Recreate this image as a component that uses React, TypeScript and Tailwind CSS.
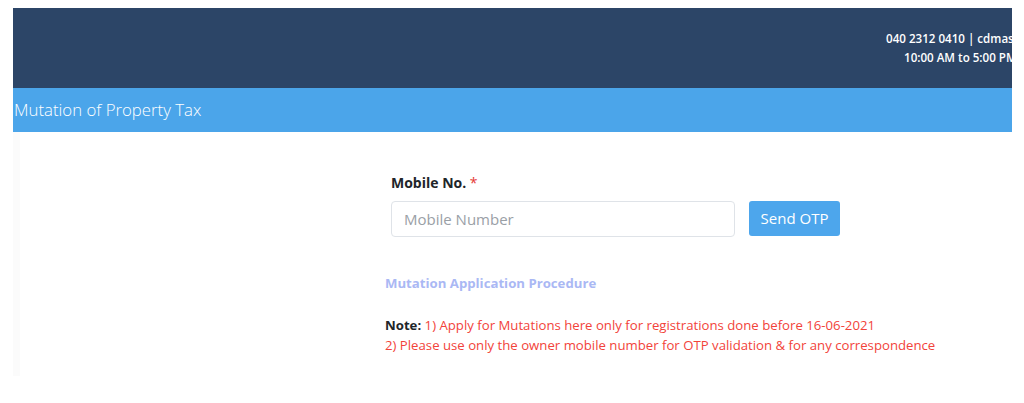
import React from "react";

export default function App() {
  return (
    <div className="w-[1024px] h-[403px] bg-white pt-[8px] pl-[13px]" style={{ fontFamily: '"Open Sans", "Noto Sans", sans-serif' }}>
      <div className="w-[999px] overflow-hidden">
        <div className="h-[80px] bg-[#2c4567] pl-[873px] pt-[21px] whitespace-nowrap text-white text-[11.6px] font-semibold leading-[19px]">
          <div>040 2312 0410 | cdmas@telangana.gov.in</div>
          <div className="pl-[18px]">10:00 AM to 5:00 PM</div>
        </div>
        <div className="h-[44px] bg-[#4ba5ea] flex items-center pl-[1px] text-white text-[16.8px] font-light">
          Mutation of Property Tax
        </div>
        <div className="h-[244px] flex border-l-[7px] border-[#fbfbfb]">
          <div className="pl-[365px] pt-[41px]">
            <div className="pl-[6px]">
              <div className="text-[14px] font-bold text-[#212529] leading-[20px]">
                Mobile No. <span className="text-[#e53935] font-normal">*</span>
              </div>
              <div className="flex items-start gap-[14px] mt-[8px]">
                <input
                  className="w-[344px] h-[36px] border border-[#dfe3e8] rounded-[4px] px-[12px] text-[15px] text-[#495057] placeholder:text-[#9aa0a6] outline-none"
                  placeholder="Mobile Number"
                />
                <button className="w-[91px] h-[35px] bg-[#4da6ec] rounded-[3px] text-white text-[15px]">
                  Send OTP
                </button>
              </div>
            </div>
            <div className="mt-[36px] text-[13.2px] font-bold text-[#aab8f4] leading-[20px]">
              Mutation Application Procedure
            </div>
            <div className="mt-[22px] text-[13.2px] leading-[20px] text-[#f2433a]">
              <div>
                <span className="font-bold text-[#212529]">Note:</span> 1) Apply for Mutations here only for registrations done before 16-06-2021
              </div>
              <div>2) Please use only the owner mobile number for OTP validation &amp; for any correspondence</div>
            </div>
          </div>
        </div>
      </div>
    </div>
  );
}
